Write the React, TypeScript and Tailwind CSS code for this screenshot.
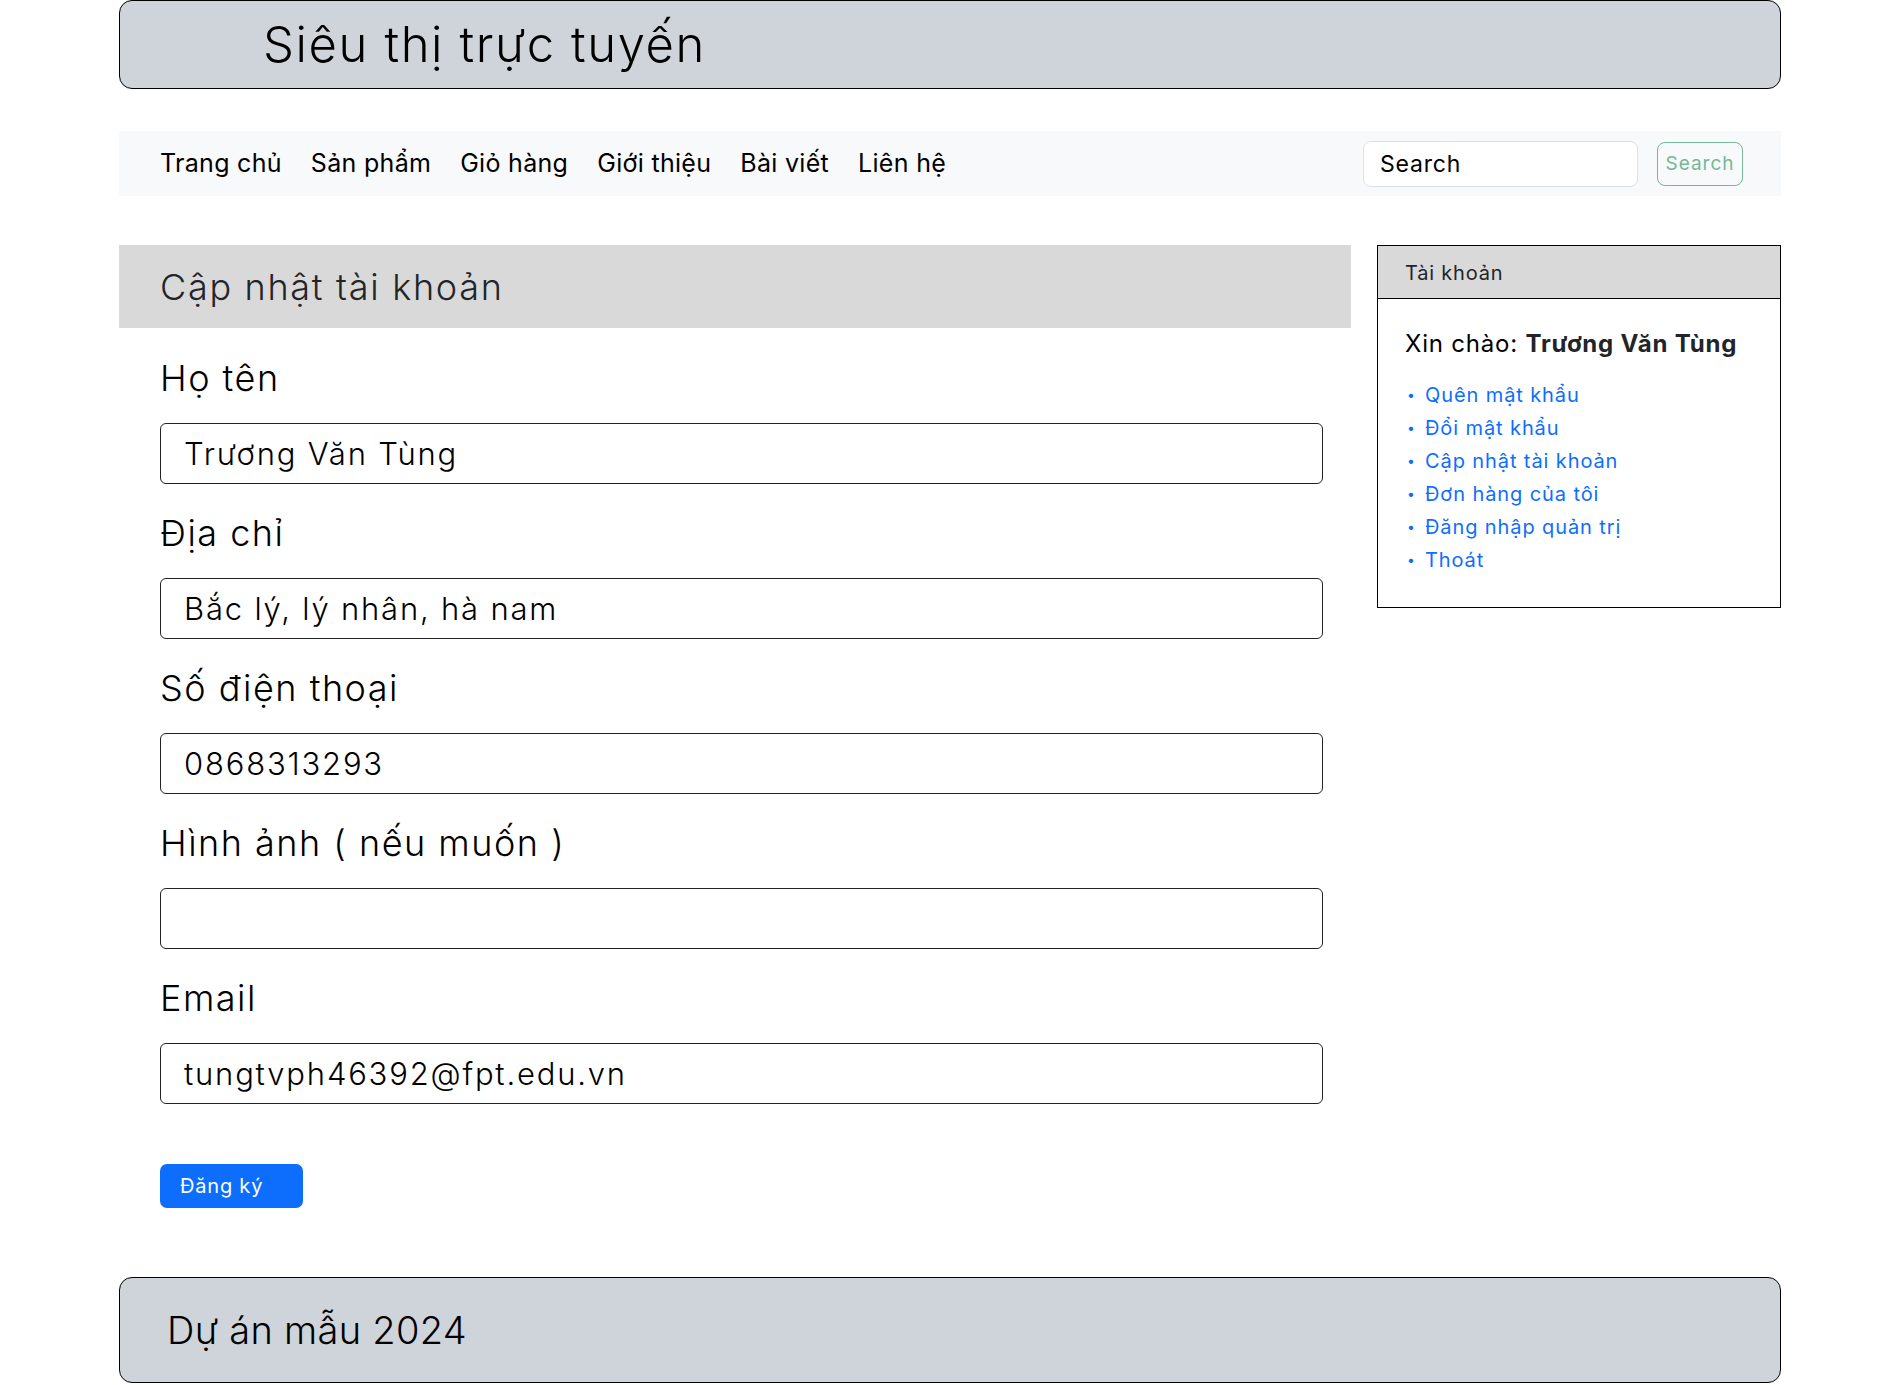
import React from 'react';

const fields = [
  { label: 'Họ tên', value: 'Trương Văn Tùng' },
  { label: 'Địa chỉ', value: 'Bắc lý, lý nhân, hà nam' },
  { label: 'Số điện thoại', value: '0868313293' },
  { label: 'Hình ảnh ( nếu muốn )', value: '' },
  { label: 'Email', value: 'tungtvph46392@fpt.edu.vn' },
];

const navLinks = ['Trang chủ', 'Sản phẩm', 'Giỏ hàng', 'Giới thiệu', 'Bài viết', 'Liên hệ'];

const accountLinks = [
  'Quên mật khẩu',
  'Đổi mật khẩu',
  'Cập nhật tài khoản',
  'Đơn hàng của tôi',
  'Đăng nhập quản trị',
  'Thoát',
];

export default function App() {
  return (
    <div className="min-h-screen bg-white font-['Inter',sans-serif] text-[#212529]">
      <div className="w-[1662px] mx-auto">
        <header className="h-[89px] flex items-center bg-[#cfd4da] border border-black rounded-[13px] pl-[143px]">
          <h1 className="text-[49px] font-light leading-none tracking-[1.6px] text-black">Siêu thị trực tuyến</h1>
        </header>

        <nav className="mt-[42px] h-[65px] flex items-center bg-[#f8f9fa] pl-[41px] pr-[38px]">
          <ul className="flex items-center gap-[29px] text-[25px] tracking-[0.3px] text-black">
            {navLinks.map((l) => (
              <li key={l}>{l}</li>
            ))}
          </ul>
          <form className="ml-auto flex items-center gap-[19px]">
            <input
              className="w-[275px] h-[46px] rounded-[8px] border border-[#dee2e6] bg-white px-[16px] text-[23px] tracking-[0.8px] text-black outline-none placeholder:text-black"
              placeholder="Search"
            />
            <button
              type="button"
              className="w-[86px] h-[44px] rounded-[8px] border border-[#75b798] pt-[2px] text-[19px] tracking-[1px] text-[#75b798]"
            >
              Search
            </button>
          </form>
        </nav>

        <div className="mt-[49px] flex items-start">
          <main className="w-[1232px]">
            <div className="h-[83px] flex items-center bg-[#d9d9d9] pl-[41px]">
              <h2 className="text-[36px] font-light tracking-[1.7px]">Cập nhật tài khoản</h2>
            </div>
            <form className="pl-[41px] pr-[28px]">
              {fields.map((f, i) => (
                <div key={f.label}>
                  <label className={`block h-[40px] leading-[40px] text-[36px] font-light tracking-[1.5px] text-black ${i === 0 ? 'mt-[30px]' : 'mt-[29px]'}`}>
                    {f.label}
                  </label>
                  <input
                    defaultValue={f.value}
                    className="mt-[25px] block w-full h-[61px] rounded-[6px] border border-[#222] px-[23px] text-[31px] font-light tracking-[1.8px] text-black outline-none"
                  />
                </div>
              ))}
              <button
                type="button"
                className="mt-[60px] w-[143px] h-[44px] rounded-[7px] bg-[#0d6efd] text-left pl-[20px] text-[20px] tracking-[0.8px] text-white"
              >
                Đăng ký
              </button>
            </form>
          </main>

          <aside className="ml-auto w-[404px] border border-black">
            <div className="h-[53px] flex items-center bg-[#d9d9d9] border-b border-black pl-[27px] pt-[2px] text-[20px] tracking-[0.8px] text-[#212529]">
              Tài khoản
            </div>
            <div className="px-[27px] pt-[22px] pb-[31px]">
              <p className="h-[46px] leading-[46px] text-[24px] tracking-[0.8px] text-black">
                Xin chào: <b className="font-bold text-[#212529]">Trương Văn Tùng</b>
              </p>
              <ul className="mt-[11px]">
                {accountLinks.map((l) => (
                  <li key={l} className="h-[33px] flex items-center text-[20px] tracking-[0.9px] text-[#0d6efd]">
                    <span className="w-[20px] pl-[2px] text-[14px]">•</span>
                    {l}
                  </li>
                ))}
              </ul>
            </div>
          </aside>
        </div>

        <footer className="mt-[69px] h-[106px] flex items-center bg-[#cfd4da] border border-black rounded-[13px] pl-[47px]">
          <p className="text-[38px] font-light tracking-[0.3px] text-black">Dự án mẫu 2024</p>
        </footer>
      </div>
    </div>
  );
}
